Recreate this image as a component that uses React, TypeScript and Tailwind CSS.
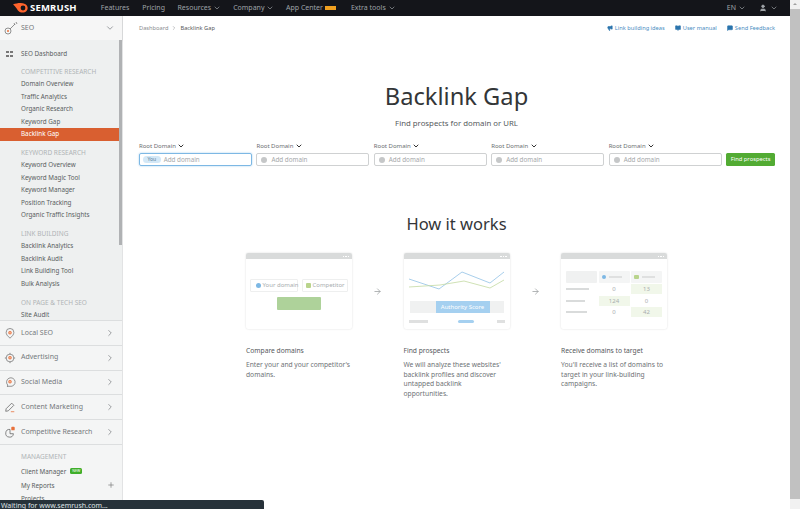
import { ChevronDown, ChevronRight, Plus, ArrowRight, User, Megaphone, BookOpen, MessageSquare } from 'lucide-react'

const font = { fontFamily: '"Noto Sans", sans-serif' }

function Flame() {
  return (
    <svg width="16" height="10" viewBox="0 0 16 10">
      <path d="M0 1.5 C4 0 9 -.5 12 1 C15 2.5 15.5 6 13.5 8 C11.5 10 7.5 10 5.5 8 C4 6.5 3.5 4.5 0 1.5Z" fill="#ff642d" />
      <circle cx="10" cy="5" r="2.4" fill="#14151a" />
    </svg>
  )
}

function SideIcon({ kind }: { kind: string }) {
  if (kind === 'key') {
    return (
      <svg width="14" height="14" viewBox="0 0 14 14" fill="none" stroke="#777" strokeWidth="0.8">
        <circle cx="4" cy="10" r="3" />
        <circle cx="4" cy="10" r="1" fill="#e8703a" stroke="none" />
        <path d="M6 8l5-5M10 2l1 2M12 1l1 2" />
      </svg>
    )
  }
  if (kind === 'pen') {
    return (
      <svg width="12" height="12" viewBox="0 0 14 14" fill="none" stroke="#666" strokeWidth="0.9">
        <path d="M2 12l.5-3L9 2.5l2.5 2.5L5 11.5z" />
        <path d="M8 12.5h4" stroke="#e8703a" />
      </svg>
    )
  }
  if (kind === 'pie') {
    return (
      <svg width="12" height="12" viewBox="0 0 14 14" fill="none" stroke="#666" strokeWidth="0.9">
        <path d="M7 4a4.5 4.5 0 1 0 4 5H7z" />
        <rect x="8.5" y="1" width="4" height="4" rx="1" fill="#e8703a" stroke="none" />
      </svg>
    )
  }
  return (
    <svg width="12" height="12" viewBox="0 0 14 14" fill="none" stroke="#777" strokeWidth="0.9">
      {kind === 'pin' && <path d="M7 13C4 10.5 2.5 8.7 2.5 6.2a4.5 4.5 0 0 1 9 0C11.5 8.7 10 10.5 7 13z" />}
      {kind === 'target' && (
        <>
          <circle cx="7" cy="7" r="4.5" />
          <path d="M7 1v1.5M7 11.5V13M1 7h1.500M11.5 7H13" />
        </>
      )}
      {kind === 'chat' && <path d="M4 12.5l.3-2A5 5 0 1 1 7 12H4z" />}
      <circle cx="7" cy="6.8" r="2" fill="#e8703a" stroke="none" />
      <circle cx="7" cy="6.8" r="0.8" fill="#fff" stroke="none" />
    </svg>
  )
}

function NavSection({ title, items }: { title: string; items: string[] }) {
  return (
    <div className="mb-[5.5px] flex flex-col">
      <div className="h-[13px] -translate-y-[0.5px] text-[6.5px] leading-[13px] text-[#b0b4b6] uppercase">{title}</div>
      {items.map((item) => (
        <div
          key={item}
          className={
            item === 'Backlink Gap'
              ? '-ml-[21px] h-[12.5px] bg-[#d95f30] pl-[21px] text-[6.3px] leading-[12.5px] text-white'
              : 'h-[12.5px] text-[6.3px] leading-[12.5px] text-[#595d60]'
          }
        >
          {item}
        </div>
      ))}
    </div>
  )
}

function SideGroup({ icon, label }: { icon: string; label: string }) {
  return (
    <div className="flex h-[24.8px] items-center border-b border-[#dcdedf] bg-[#f4f5f5] pl-[4px] pr-[7px]">
      <div className="flex w-[17px] justify-start">
        <SideIcon kind={icon} />
      </div>
      <span className="flex-1 text-[7px] text-[#75797c]">{label}</span>
      <ChevronRight size={10} className="text-[#8a8d90]" />
    </div>
  )
}

function Sidebar() {
  return (
    <aside className="flex h-full w-[123px] shrink-0 flex-col border-r border-[#e2e3e4] bg-[#f4f5f5]">
      <div className="flex h-[24px] shrink-0 items-center bg-[#f6f6f6] pl-[4px] pr-[7px] shadow-[0_1px_2px_rgba(0,0,0,0.15)]">
        <SideIcon kind="key" />
        <span className="ml-[3px] flex-1 text-[7px] text-[#75797c]">SEO</span>
        <ChevronDown size={10} className="text-[#8a8d90]" />
      </div>
      <div className="flex h-[280px] shrink-0 overflow-hidden bg-[#eef0f0]">
        <div className="min-w-0 flex-1 overflow-hidden pl-[21px] pt-[7px]">
          <div className="relative mb-[5px] h-[13px] text-[6.3px] leading-[13px] text-[#595d60]">
            <span className="absolute -left-[15px] top-[3.5px] grid grid-cols-2 gap-[1.5px]">
              <i className="h-[2.5px] w-[2.5px] bg-[#777]" />
              <i className="h-[2.5px] w-[2.5px] bg-[#777]" />
              <i className="h-[2.5px] w-[2.5px] bg-[#777]" />
              <i className="h-[2.5px] w-[2.5px] bg-[#777]" />
            </span>
            SEO Dashboard
          </div>
          <NavSection
            title="Competitive Research"
            items={['Domain Overview', 'Traffic Analytics', 'Organic Research', 'Keyword Gap', 'Backlink Gap']}
          />
          <NavSection
            title="Keyword Research"
            items={['Keyword Overview', 'Keyword Magic Tool', 'Keyword Manager', 'Position Tracking', 'Organic Traffic Insights']}
          />
          <NavSection title="Link Building" items={['Backlink Analytics', 'Backlink Audit', 'Link Building Tool', 'Bulk Analysis']} />
          <NavSection title="On Page & Tech SEO" items={['Site Audit']} />
        </div>
        <div className="w-[3px] shrink-0 bg-[#eef0f0]">
          <div className="h-[205px] bg-[#b0b2b4]" />
        </div>
      </div>
      <div className="shrink-0 border-t border-[#dcdedf]">
        <SideGroup icon="pin" label="Local SEO" />
        <SideGroup icon="target" label="Advertising" />
        <SideGroup icon="chat" label="Social Media" />
        <SideGroup icon="pen" label="Content Marketing" />
        <SideGroup icon="pie" label="Competitive Research" />
      </div>
      <div className="pl-[21px] pr-[6px] pt-[6px] text-[6.3px] text-[#595d60]">
        <div className="h-[13.5px] text-[6.5px] leading-[12px] text-[#b0b4b6]">MANAGEMENT</div>
        <div className="flex h-[14px] items-center gap-[4px]">
          Client Manager
          <span className="rounded-[1.5px] bg-[#3fae2a] px-[2px] text-[3.5px] leading-[6px] text-white">NEW</span>
        </div>
        <div className="flex h-[14px] items-center justify-between pr-[1px]">
          My Reports
          <Plus size={8} className="text-[#777]" />
        </div>
        <div className="h-[13px] leading-[13px]">Projects</div>
      </div>
    </aside>
  )
}

function TopBar() {
  return (
    <header className="flex h-[16px] shrink-0 items-center bg-[#14151a] pl-[13px] pr-[12px] text-[7px] text-[#9fa3a8]">
      <Flame />
      <span className="ml-[1px] text-[9.5px] font-bold tracking-[0.2px] text-white">SEMRUSH</span>
      <span className="ml-[24px]">Features</span>
      <span className="ml-[13px]">Pricing</span>
      <span className="ml-[12.5px] flex items-center gap-[2px]">
        Resources <ChevronDown size={8} />
      </span>
      <span className="ml-[12px] flex items-center gap-[2px]">
        Company <ChevronDown size={8} />
      </span>
      <span className="ml-[11.5px] flex items-center gap-[2px]">
        App Center <i className="h-[4px] w-[11px] bg-[#f0a020]" />
      </span>
      <span className="ml-[15px] flex items-center gap-[2px]">
        Extra tools <ChevronDown size={8} />
      </span>
      <span className="ml-auto flex items-center gap-[2px]">
        EN <ChevronDown size={8} />
      </span>
      <span className="ml-[13px] flex items-center gap-[3px]">
        <User size={8} fill="currentColor" /> <ChevronDown size={8} />
      </span>
    </header>
  )
}

function DomainField({ first }: { first?: boolean }) {
  return (
    <div className="flex min-w-0 flex-1 flex-col">
      <div className="flex h-[14px] items-center gap-[1.5px] text-[6px] text-[#6a6e71]">
        Root Domain <ChevronDown size={8} strokeWidth={3} className="text-[#333]" />
      </div>
      <div
        className={
          first
            ? 'flex h-[13px] items-center rounded-[2px] border border-[#7db8e4] pl-[3px] text-[6.3px] text-[#a5a8aa] shadow-[0_0_2px_#9ccbed]'
            : 'flex h-[13px] items-center rounded-[2px] border border-[#cfd1d2] pl-[4px] text-[6.3px] text-[#a5a8aa]'
        }
      >
        {first ? (
          <span className="mr-[3px] rounded-full bg-[#d3e8f7] px-[4.5px] text-[5px] leading-[7px] text-[#5b7f99]">You</span>
        ) : (
          <span className="mr-[4px] h-[6px] w-[6px] rounded-full bg-[#c5c7c8]" />
        )}
        Add domain
      </div>
    </div>
  )
}

function Browser({ children }: { children: React.ReactNode }) {
  return (
    <div className="flex h-[76px] w-[106px] flex-col overflow-hidden rounded-[2px] bg-white shadow-[0_0_2px_rgba(0,0,0,0.15)]">
      <div className="flex h-[6px] shrink-0 items-center justify-end gap-[1px] bg-[#d9dbdb] pr-[3px]">
        <i className="h-[1px] w-[1.5px] bg-white" />
        <i className="h-[1px] w-[1.5px] bg-white" />
        <i className="h-[1px] w-[1.5px] bg-white" />
      </div>
      {children}
    </div>
  )
}

function CompareArt() {
  return (
    <Browser>
      <div className="flex flex-col items-center pt-[20px]">
        <div className="flex gap-[4px]">
          <span className="flex h-[13px] w-[48px] items-center gap-[2px] whitespace-nowrap rounded-[1px] border border-[#eeefef] pl-[5px] text-[6px] text-[#a9adaf]">
            <i className="h-[4.5px] w-[4.5px] shrink-0 rounded-full bg-[#7db8e4]" /> Your domain
          </span>
          <span className="flex h-[13px] w-[46px] items-center gap-[2px] whitespace-nowrap rounded-[1px] border border-[#eeefef] pl-[3px] text-[6px] text-[#a9adaf]">
            <i className="h-[4.5px] w-[4.5px] shrink-0 rounded-[1px] bg-[#b9d48c]" /> Competitor
          </span>
        </div>
        <div className="mt-[5px] h-[13px] w-[44px] rounded-[1px] bg-[#aed29a]" />
      </div>
    </Browser>
  )
}

function ProspectsArt() {
  return (
    <Browser>
      <svg width="106" height="38" viewBox="0 0 106 38" fill="none" className="shrink-0">
        <path d="M5 20L35 30L58 13L86 24L100 13" stroke="#92c1e6" strokeWidth="0.8" />
        <path d="M5 28L36 26L60 22L86 29L100 21" stroke="#c3d9a2" strokeWidth="0.8" />
      </svg>
      <div className="mt-[4px] flex h-[12px] px-[6px]">
        <div className="w-[26px] bg-[#f0f1f1]" />
        <div className="flex flex-1 items-center justify-center bg-[#a5d0f0] text-[6px] text-white">Authority Score</div>
        <div className="w-[14px] bg-[#f0f1f1]" />
      </div>
      <div className="mt-[7px] flex items-center justify-between px-[5px]">
        <i className="h-[2.5px] w-[19px] bg-[#dfe0e0]" />
        <i className="ml-[8px] h-[2.5px] w-[16px] rounded-full bg-[#a5d0f0]" />
        <i className="h-[2.5px] w-[8px] bg-[#dfe0e0]" />
      </div>
    </Browser>
  )
}

const tableRows = [
  { w: 'w-[23px]', a: '0', b: '13', hi: 'b' },
  { w: 'w-[19px]', a: '124', b: '0', hi: 'a' },
  { w: 'w-[21px]', a: '0', b: '42', hi: 'b' },
]

function TargetArt() {
  return (
    <Browser>
      <div className="flex flex-col px-[5px] pt-[12px]">
        <div className="flex h-[12px] gap-[1.5px]">
          <div className="w-[31px] rounded-[1px] bg-[#f0f1f1]" />
          <div className="flex w-[31px] items-center gap-[3px] rounded-[1px] bg-[#f4f5f5] pl-[3px]">
            <i className="h-[4.5px] w-[4.5px] rounded-full bg-[#7db8e4]" />
            <i className="h-[2px] w-[13px] bg-[#dfe0e0]" />
          </div>
          <div className="flex w-[31px] items-center gap-[3px] rounded-[1px] bg-[#f4f5f5] pl-[3px]">
            <i className="h-[4.5px] w-[4.5px] rounded-[1px] bg-[#b9d48c]" />
            <i className="h-[2px] w-[13px] bg-[#dfe0e0]" />
          </div>
        </div>
        {tableRows.map((r) => (
          <div key={r.a + r.b} className="mt-[1.3px] flex h-[10px] items-center gap-[1.5px] text-[6px] text-[#a9adaf]">
            <div className="w-[31px]">
              <i className={`block h-[2px] ${r.w} bg-[#d9dbdb]`} />
            </div>
            <div className={r.hi === 'a' ? 'w-[31px] bg-[#f1f7ea] text-center leading-[10px]' : 'w-[31px] text-center leading-[10px]'}>{r.a}</div>
            <div className={r.hi === 'b' ? 'w-[31px] bg-[#f1f7ea] text-center leading-[10px]' : 'w-[31px] text-center leading-[10px]'}>{r.b}</div>
          </div>
        ))}
      </div>
    </Browser>
  )
}

function Step({ title, text }: { title: string; text: string }) {
  return (
    <div className="w-[106px]">
      <div className="text-[6.7px] leading-[10px] text-[#55595c]">{title}</div>
      <div className="mt-[4px] whitespace-pre-line text-[6.7px] leading-[9.7px] text-[#6e7275]">{text}</div>
    </div>
  )
}

function Main() {
  return (
    <main className="flex h-full min-w-0 flex-1 flex-col bg-white">
      <div className="flex h-[24px] shrink-0 items-center justify-between pl-[16px] pr-[15px] text-[5.7px]">
        <div className="flex items-center gap-[3px] text-[#8a8d90]">
          Dashboard <ChevronRight size={6} />
          <span className="text-[#55595c]">Backlink Gap</span>
        </div>
        <div className="flex items-center gap-[10px] text-[#4a8dbf]">
          <span className="flex items-center gap-[2px]">
            <Megaphone size={6} fill="#2a74ad" className="text-[#2a74ad]" /> Link building ideas
          </span>
          <span className="flex items-center gap-[2px]">
            <BookOpen size={6} fill="#2a74ad" className="text-[#2a74ad]" /> User manual
          </span>
          <span className="flex items-center gap-[2px]">
            <MessageSquare size={6} fill="#2a74ad" className="text-[#2a74ad]" /> Send Feedback
          </span>
        </div>
      </div>
      <h1 className="mt-[36px] text-center text-[23.7px] leading-[40px] font-normal text-[#333638]">Backlink Gap</h1>
      <p className="mt-[1px] text-center text-[7.8px] leading-[12px] text-[#55595c]">Find prospects for domain or URL</p>
      <div className="mt-[10px] flex items-end gap-[4.5px] pl-[16px] pr-[15px]">
        <DomainField first />
        <DomainField />
        <DomainField />
        <DomainField />
        <DomainField />
        <button className="h-[13px] w-[49px] shrink-0 rounded-[1.5px] bg-[#52ab33] text-[5.8px] text-white">Find prospects</button>
      </div>
      <h2 className="mt-[46px] text-center text-[16.5px] leading-[24px] font-normal text-[#333638]">How it works</h2>
      <div className="mt-[17px] flex items-center justify-center gap-[20.25px]">
        <CompareArt />
        <ArrowRight size={9} className="mx-[1px] text-[#9a9d9f]" />
        <ProspectsArt />
        <ArrowRight size={9} className="mx-[1px] text-[#9a9d9f]" />
        <TargetArt />
      </div>
      <div className="mt-[17px] flex items-start justify-center gap-[51.5px]">
        <Step title="Compare domains" text={"Enter your and your competitor's\ndomains."} />
        <Step title="Find prospects" text={"We will analyze these websites'\nbacklink profiles and discover\nuntapped backlink\nopportunities."} />
        <Step title="Receive domains to target" text={"You'll receive a list of domains to\ntarget in your link-building\ncampaigns."} />
      </div>
    </main>
  )
}

export default function App() {
  return (
    <div className="relative flex h-[509px] w-[800px] overflow-hidden bg-white" style={font}>
      <div className="flex min-w-0 flex-1 flex-col">
        <TopBar />
        <div className="flex min-h-0 flex-1">
          <Sidebar />
          <Main />
        </div>
      </div>
      <div className="flex w-[10px] shrink-0 flex-col bg-[#f1f1f1]">
        <svg width="10" height="8" viewBox="0 0 10 8" className="shrink-0">
          <path d="M3 5l2-2 2 2z" fill="#a0a0a0" />
        </svg>
        <div className="mt-[1px] h-[490px] bg-[#c1c1c1]" />
      </div>
      <div className="absolute bottom-0 left-0 h-[9px] w-[264px] overflow-hidden rounded-tr-[2px] bg-[#27323a] pl-[1px] text-[7px] leading-[12px] text-[#dfe3e6]">
        Waiting for www.semrush.com...
      </div>
    </div>
  )
}
